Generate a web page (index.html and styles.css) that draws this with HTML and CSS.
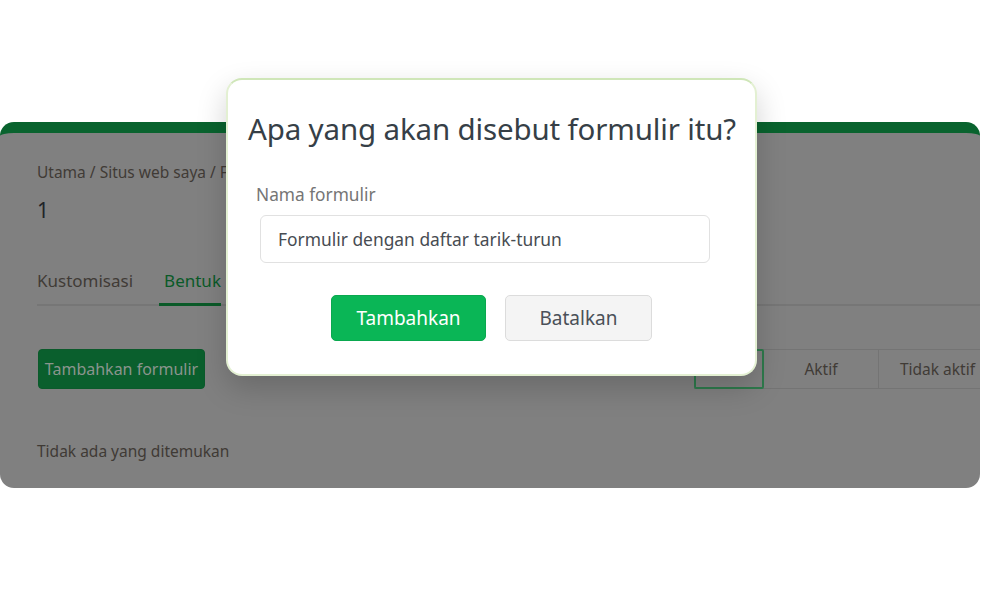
FILE: index.html
```html
<!DOCTYPE html>
<html lang="id">
<head>
<meta charset="utf-8">
<title>Formulir</title>
<link rel="stylesheet" href="styles.css">
</head>
<body>
<div class="stage">
  <div class="card">
    <div class="card-body">
      <div class="crumbs">Utama / Situs web saya / Formulir</div>
      <div class="page-title">1</div>
      <div class="tabs">
        <div class="tab">Kustomisasi</div>
        <div class="tab tab-active">Bentuk</div>
      </div>
      <div class="toolbar">
        <button class="btn-add">Tambahkan formulir</button>
        <div class="segments">
          <div class="seg seg-active">Semua</div>
          <div class="seg">Aktif</div>
          <div class="seg">Tidak aktif</div>
        </div>
      </div>
      <div class="empty">Tidak ada yang ditemukan</div>
    </div>
  </div>

  <div class="modal">
    <h1 class="modal-title">Apa yang akan disebut formulir itu?</h1>
    <label class="field-label">Nama formulir</label>
    <div class="field-input">Formulir dengan daftar tarik-turun</div>
    <div class="actions">
      <button class="btn btn-primary">Tambahkan</button>
      <button class="btn btn-secondary">Batalkan</button>
    </div>
  </div>
</div>
</body>
</html>
```

FILE: styles.css
```css
* { box-sizing: border-box; }
html, body { margin: 0; padding: 0; background: #ffffff; }
body {
  width: 981px;
  height: 610px;
  overflow: hidden;
  font-family: "Noto Sans", "Open Sans", sans-serif;
}
.stage {
  position: relative;
  padding-top: 122px;
  height: 610px;
}
.card {
  height: 366px;
  width: 980px;
  background: #808080;
  border-top: 11px solid #09632e;
  border-radius: 14px;
  overflow: hidden;
}
.card-body {
  padding: 28px 0 0 37px;
  color: #3f3a35;
}
.crumbs {
  font-size: 15.5px;
  line-height: 22px;
  color: #403b36;
}
.page-title {
  margin-top: 15px;
  font-size: 21px;
  line-height: 24px;
  color: #1f2328;
}
.tabs {
  margin-top: 47px;
  display: flex;
  border-bottom: 2px solid #767676;
  font-size: 17px;
  line-height: 23px;
}
.tab {
  padding: 0 26px 11px 0;
  color: #403b36;
}
.tab-active {
  color: #0a5a28;
  padding: 0 0 11px 5px;
  margin-bottom: -2px;
  border-bottom: 3px solid #0a5a28;
  width: 62px;
}
.toolbar {
  margin-top: 43px;
  display: flex;
  align-items: center;
}
.btn-add {
  flex-shrink: 0;
  white-space: nowrap;
  width: 167px;
  height: 40px;
  padding: 0;
  margin-left: 1px;
  background: #0a5f2d;
  border: 1px solid #0b5a2b;
  border-radius: 4px;
  color: #8a958d;
  font-family: inherit;
  font-size: 16px;
}
.segments {
  flex-shrink: 0;
  margin-left: 489px;
  display: flex;
  height: 40px;
  border-top: 1px solid #747474;
  border-bottom: 1px solid #747474;
}
.seg {
  flex-shrink: 0;
  white-space: nowrap;
  display: flex;
  align-items: center;
  justify-content: center;
  font-size: 15.5px;
  color: #403b36;
  border-left: 1px solid #747474;
}
.seg:nth-child(1) { width: 70px; color: transparent; border: 2px solid #2e7a4c; border-radius: 2px; margin: -1px 0; }
.seg:nth-child(2) { width: 114px; border-left: none; }
.seg:nth-child(3) { width: 118px; }
.empty {
  margin-top: 52px;
  font-size: 15.5px;
  line-height: 20px;
  color: #3f3a35;
}

.modal {
  position: absolute;
  top: 78px;
  left: 226px;
  width: 531px;
  height: 298px;
  background: #ffffff;
  border: 2px solid #e3f0d2;
  border-top-color: #cfe6b8;
  border-radius: 16px;
  box-shadow: 0 12px 30px rgba(0,0,0,0.18);
  padding: 0 0 0 20px;
}
.modal-title {
  margin: 31px 0 0 0;
  font-size: 29.5px;
  font-weight: 400;
  line-height: 36px;
  color: #363f47;
  letter-spacing: -0.15px;
}
.field-label {
  display: block;
  margin: 37px 0 0 8px;
  font-size: 17.3px;
  line-height: 22px;
  color: #757575;
}
.field-input {
  margin: 9px 0 0 12px;
  width: 450px;
  height: 48px;
  border: 1px solid #e1e1e1;
  border-radius: 6px;
  padding: 0 17px;
  display: flex;
  align-items: center;
  font-size: 17.4px;
  color: #474c52;
}
.actions {
  margin-top: 32px;
  display: flex;
  gap: 19px;
  padding-left: 83px;
}
.btn {
  height: 46px;
  border-radius: 5px;
  font-family: inherit;
  font-size: 19px;
}
.btn-primary {
  width: 155px;
  background: #0ab656;
  border: 1px solid #0aa84f;
  color: #ffffff;
}
.btn-secondary {
  width: 147px;
  background: #f4f4f4;
  border: 1px solid #dcdcdc;
  color: #4a5058;
}
```
